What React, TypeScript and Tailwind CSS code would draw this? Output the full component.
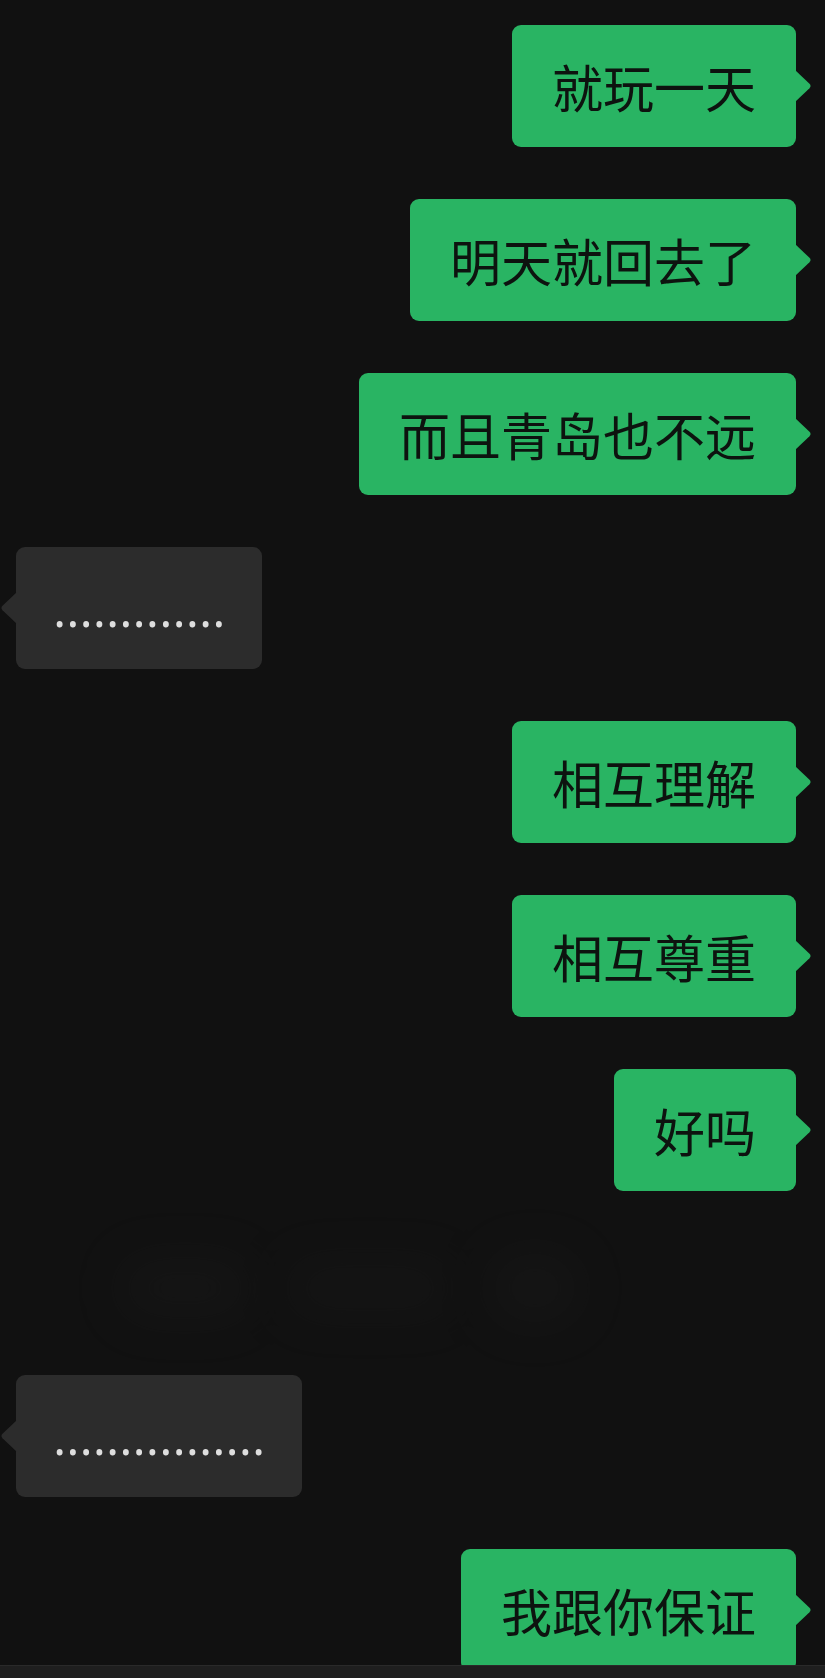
import React from "react";

const green = [
  "就玩一天",
  "明天就回去了",
  "而且青岛也不远",
];

function GreenBubble({ text }: { text: string }) {
  return (
    <div className="flex justify-end pr-[29px]">
      <div className="relative h-[122px] rounded-[9px] bg-[#29b463] px-[40px] flex items-center">
        <span
          className="text-[51px] leading-none text-[#0d130f] whitespace-nowrap"
          style={{ fontFamily: '"Noto Sans CJK SC", "Noto Sans", sans-serif' }}
        >
          {text}
        </span>
        <svg
          className="absolute left-full top-1/2 -translate-y-1/2 -ml-[1px]"
          width="17"
          height="32"
          viewBox="0 0 17 32"
        >
          <path d="M0 0 L14.5 13.8 Q16.6 16 14.5 18.2 L0 32 Z" fill="#29b463" />
        </svg>
      </div>
    </div>
  );
}

function GrayBubble({ count }: { count: number }) {
  return (
    <div className="flex justify-start pl-[16px]">
      <div className="relative h-[122px] rounded-[9px] bg-[#2c2c2c] px-[37px] flex items-center">
        <span
          className="text-[50.5px] leading-none font-medium text-[#dedede] whitespace-nowrap"
          style={{ fontFamily: '"Open Sans", "Liberation Sans", sans-serif' }}
        >
          {".".repeat(count)}
        </span>
        <svg
          className="absolute right-full top-1/2 -translate-y-1/2 -mr-[1px]"
          width="17"
          height="32"
          viewBox="0 0 17 32"
        >
          <path d="M17 0 L2.5 13.8 Q0.4 16 2.5 18.2 L17 32 Z" fill="#2c2c2c" />
        </svg>
      </div>
    </div>
  );
}

export default function App() {
  return (
    <div className="w-[825px] h-[1678px] bg-[#111111] flex flex-col overflow-hidden">
      <div className="h-[1665px] overflow-hidden flex flex-col gap-[52px] pt-[25px]">
        {green.map((t) => (
          <GreenBubble key={t} text={t} />
        ))}
        <GrayBubble count={13} />
        <GreenBubble text="相互理解" />
        <GreenBubble text="相互尊重" />
        <GreenBubble text="好吗" />
        <div className="relative h-[80px] shrink-0">
          <div className="absolute left-[120px] top-[-10px] w-[460px] h-[110px] flex gap-[40px] items-center opacity-35">
            <div className="w-[130px] h-[60px] rounded-full bg-[#1c1c1c] blur-[22px]" />
            <div className="w-[160px] h-[50px] rounded-full bg-[#1b1b1b] blur-[22px]" />
            <div className="w-[90px] h-[70px] rounded-full bg-[#1d1d1d] blur-[22px]" />
          </div>
        </div>
        <GrayBubble count={16} />
        <GreenBubble text="我跟你保证" />
      </div>
      <div className="h-[13px] bg-[#1f1f1f] border-t border-[#2a2a2a]" />
    </div>
  );
}
